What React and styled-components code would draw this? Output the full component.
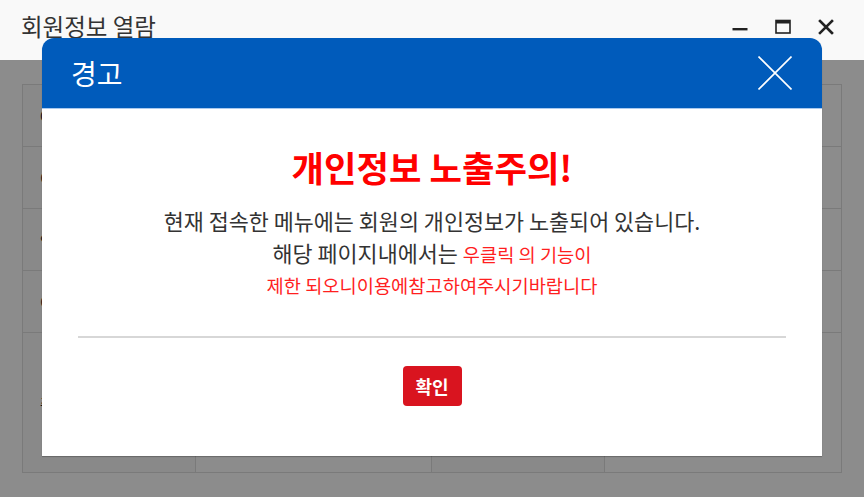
import React from "react";
import styled, { createGlobalStyle } from "styled-components";

const Global = createGlobalStyle`
  html, body { margin: 0; padding: 0; }
  body {
    font-family: "Noto Sans CJK KR", "Noto Sans", sans-serif;
    background: #ffffff;
    overflow: hidden;
  }
`;

const Page = styled.div`
  position: relative;
  width: 864px;
  height: 497px;
  display: flex;
  flex-direction: column;
  overflow: hidden;
`;

const TitleBar = styled.header`
  height: 60px;
  flex: none;
  background: #f9f9f9;
  display: flex;
  align-items: center;
  padding: 0 17px 6px 21px;
  box-sizing: border-box;
`;

const WindowTitle = styled.h1`
  margin: 0;
  flex: 1;
  font-size: 23.5px;
  font-weight: 400;
  color: #333;
  line-height: 1;
`;

const Controls = styled.div`
  display: flex;
`;

const CtrlButton = styled.button`
  width: 43px;
  height: 24px;
  border: 0;
  background: transparent;
  padding: 0;
  display: flex;
  align-items: center;
  justify-content: center;
`;

const Content = styled.main`
  position: relative;
  flex: 1;
  background: #fff;
  padding: 24px 22px 0 22px;
`;

const Table = styled.div`
  display: grid;
  grid-template-columns: 172px 235px 172px 236px;
  grid-template-rows: 61px 61px 61px 61px 139px;
  gap: 1px;
  background: #dedede;
  border: 1px solid #dedede;
  width: fit-content;
`;

const Cell = styled.div`
  background: ${(p) => (p.$label ? "#fafafa" : "#ffffff")};
  display: flex;
  align-items: center;
  padding-left: 17px;
  font-size: 14px;
  color: #222;
`;

const Overlay = styled.div`
  position: absolute;
  inset: 0;
  background: rgba(0, 0, 0, 0.45);
`;

const Modal = styled.section`
  position: absolute;
  top: 38px;
  left: 42px;
  width: 780px;
  background: #fff;
  border-radius: 12px 12px 0 0;
  box-shadow: 0 1px 1px rgba(0, 0, 0, 0.25);
  overflow: hidden;
`;

const ModalHeader = styled.div`
  height: 70px;
  background: #005bbb;
  border-bottom: 1px solid #a9c9ee;
  display: flex;
  align-items: center;
  justify-content: space-between;
  padding: 0 30px 0 29px;
`;

const ModalTitle = styled.h2`
  margin: 0;
  color: #fff;
  font-size: 28px;
  font-weight: 400;
  line-height: 1;
`;

const CloseButton = styled.button`
  border: 0;
  background: transparent;
  padding: 0;
  width: 34px;
  height: 34px;
  display: block;
`;

const ModalBody = styled.div`
  padding: 38px 36px 50px 36px;
  display: flex;
  flex-direction: column;
  align-items: center;
`;

const Headline = styled.h3`
  margin: 0;
  color: #ff0000;
  font-size: 35.3px;
  font-weight: 700;
  line-height: 40px;
  height: 40px;
`;

const Message = styled.div`
  margin-top: 18px;
  text-align: center;
  color: #333;
  font-size: 21.8px;
`;

const Line = styled.p`
  margin: 0;
  height: 31.5px;
  line-height: 31.5px;
  white-space: nowrap;
`;

const Warn = styled.span`
  color: #ff1f1f;
  font-size: 18.7px;
  line-height: 1;
`;

const Divider = styled.hr`
  align-self: stretch;
  margin: 36.5px 0 0 0;
  border: 0;
  height: 2px;
  background: #d7d7d7;
`;

const ConfirmButton = styled.button`
  margin-top: 28px;
  width: 59px;
  height: 40px;
  border: 0;
  border-radius: 4px;
  background: #d9141f;
  color: #fff;
  font-family: inherit;
  font-size: 18px;
  font-weight: 700;
  padding: 0;
`;

const labels = ["아이디", "이름", "연락처", "이메일", "주소"];

export default function App() {
  return (
    <Page>
      <Global />
      <TitleBar>
        <WindowTitle>회원정보 열람</WindowTitle>
        <Controls>
          <CtrlButton aria-label="최소화">
            <svg width="16" height="16" viewBox="0 0 16 16">
              <rect x="0.5" y="9" width="15" height="2.4" fill="#222" />
            </svg>
          </CtrlButton>
          <CtrlButton aria-label="최대화">
            <svg width="16" height="16" viewBox="0 0 16 16">
              <rect x="1" y="1.5" width="14" height="12.5" fill="none" stroke="#222" strokeWidth="1.6" />
              <rect x="1" y="1.5" width="14" height="3" fill="#222" />
            </svg>
          </CtrlButton>
          <CtrlButton aria-label="닫기">
            <svg width="16" height="16" viewBox="0 0 16 16">
              <path d="M2 2 L14 14 M14 2 L2 14" stroke="#222" strokeWidth="2.6" strokeLinecap="square" />
            </svg>
          </CtrlButton>
        </Controls>
      </TitleBar>
      <Content>
        <Table>
          {labels.map((l) => (
            <React.Fragment key={l}>
              <Cell $label>{l}</Cell>
              <Cell />
              <Cell $label />
              <Cell />
            </React.Fragment>
          ))}
        </Table>
        <Overlay />
      </Content>
      <Modal role="dialog">
        <ModalHeader>
          <ModalTitle>경고</ModalTitle>
          <CloseButton aria-label="닫기">
            <svg width="34" height="34" viewBox="0 0 34 34">
              <path d="M0.5 0.5 L33.5 33.5 M33.5 0.5 L0.5 33.5" stroke="#fff" strokeWidth="1.6" />
            </svg>
          </CloseButton>
        </ModalHeader>
        <ModalBody>
          <Headline>개인정보 노출주의!</Headline>
          <Message>
            <Line>현재 접속한 메뉴에는 회원의 개인정보가 노출되어 있습니다.</Line>
            <Line>
              해당 페이지내에서는 <Warn>우클릭 의 기능이</Warn>
            </Line>
            <Line>
              <Warn>제한 되오니이용에참고하여주시기바랍니다</Warn>
            </Line>
          </Message>
          <Divider />
          <ConfirmButton>확인</ConfirmButton>
        </ModalBody>
      </Modal>
    </Page>
  );
}
